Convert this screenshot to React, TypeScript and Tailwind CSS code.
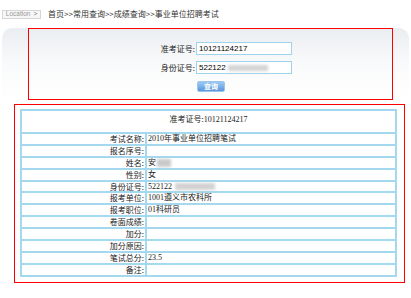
export default function App() {
  const rows: { label: string; value: React.ReactNode }[] = [
    { label: '考试名称:', value: '2010年事业单位招聘笔试' },
    { label: '报名序号:', value: '' },
    {
      label: '姓名:',
      value: (
        <span className="flex items-center">
          安<span className="ml-[1px] inline-block h-[8px] w-[14px] bg-[#c9c9c9] blur-[1.5px]" />
        </span>
      ),
    },
    { label: '性别:', value: '女' },
    {
      label: '身份证号:',
      value: (
        <span className="flex items-center">
          522122<span className="ml-[3px] inline-block h-[7px] w-[40px] bg-[#d2d2d2] blur-[1.5px]" />
        </span>
      ),
    },
    { label: '报考单位:', value: '1001遵义市农科所' },
    { label: '报考职位:', value: '01科研员' },
    { label: '卷面成绩:', value: '' },
    { label: '加分:', value: '' },
    { label: '加分原因:', value: '' },
    { label: '笔试总分:', value: '23.5' },
    { label: '备注:', value: '' },
  ];

  return (
    <div className="relative h-[298px] w-[411px] overflow-hidden bg-white text-[8px] leading-none text-[#222] [font-family:'Noto_Sans_CJK_SC',sans-serif]">
      {/* breadcrumb */}
      <div className="flex h-[28px] items-start pt-[10px] pl-[2px]">
        <div className="flex h-[9px] w-[39px] items-center justify-center gap-[3px] border border-[#d6d6d6] bg-[#f7f7f7] text-[6.5px] text-[#999] [font-family:'Liberation_Sans',sans-serif]">
          <span>Location</span>
          <span className="text-[#777]">&gt;</span>
        </div>
        <div className="ml-[7px] text-[8px] text-[#333]">首页&gt;&gt;常用查询&gt;&gt;成绩查询&gt;&gt;事业单位招聘考试</div>
      </div>

      {/* search panel */}
      <div className="ml-[2px] w-[407px] rounded-t-[10px] bg-gradient-to-b from-[#eaedf1] via-[#f9fafb] to-white pl-[26px]">
        <div className="h-[72px] w-[365px] border border-[#ff0000] pt-[13px]">
          <div className="flex items-center">
            <div className="w-[167px] pr-[1px] text-right">准考证号:</div>
            <div className="flex h-[13px] w-[96px] items-center border border-[#9fd3ec] bg-white pl-[2px] text-[8px] text-black [font-family:'Liberation_Sans',sans-serif]">
              10121124217
            </div>
          </div>
          <div className="mt-[6px] flex items-center">
            <div className="w-[167px] pr-[1px] text-right">身份证号:</div>
            <div className="flex h-[13px] w-[96px] items-center border border-[#9fd3ec] bg-white pl-[2px] text-[8px] text-black [font-family:'Liberation_Sans',sans-serif]">
              522122
              <span className="ml-[2px] inline-block h-[6px] w-[40px] bg-[#d4d4d4] blur-[1.5px]" />
            </div>
          </div>
          <div className="mt-[7px] pl-[168px]">
            <button className="flex h-[11px] w-[28px] items-center justify-center rounded-[2px] border border-[#9cc4ec] bg-gradient-to-b from-[#9ccaf3] to-[#5b95dc] text-[7px] font-bold text-white">
              查询
            </button>
          </div>
        </div>
      </div>

      {/* result */}
      <div className="ml-[14px] mt-[4px] h-[179px] w-[391px] border border-[#ff0000] pl-[5px] pt-[4px]">
        <div className="w-[377px] border-2 border-[#a3d8ee]">
          <div className="h-[21px] pt-[4px] text-center">
            准考证号:<span className="[font-family:'Liberation_Serif',serif]">10121124217</span>
          </div>
          {rows.map((r) => (
            <div key={r.label} className="grid h-[11.9px] grid-cols-[123px_1fr] border-t-2 border-[#a3d8ee]">
              <div className="flex items-center justify-end pr-[1px]">{r.label}</div>
              <div className="flex items-center border-l-2 border-[#a3d8ee] pl-[1px] [font-family:'Liberation_Serif','Noto_Sans_CJK_SC',serif]">
                {r.value}
              </div>
            </div>
          ))}
        </div>
      </div>
    </div>
  );
}
